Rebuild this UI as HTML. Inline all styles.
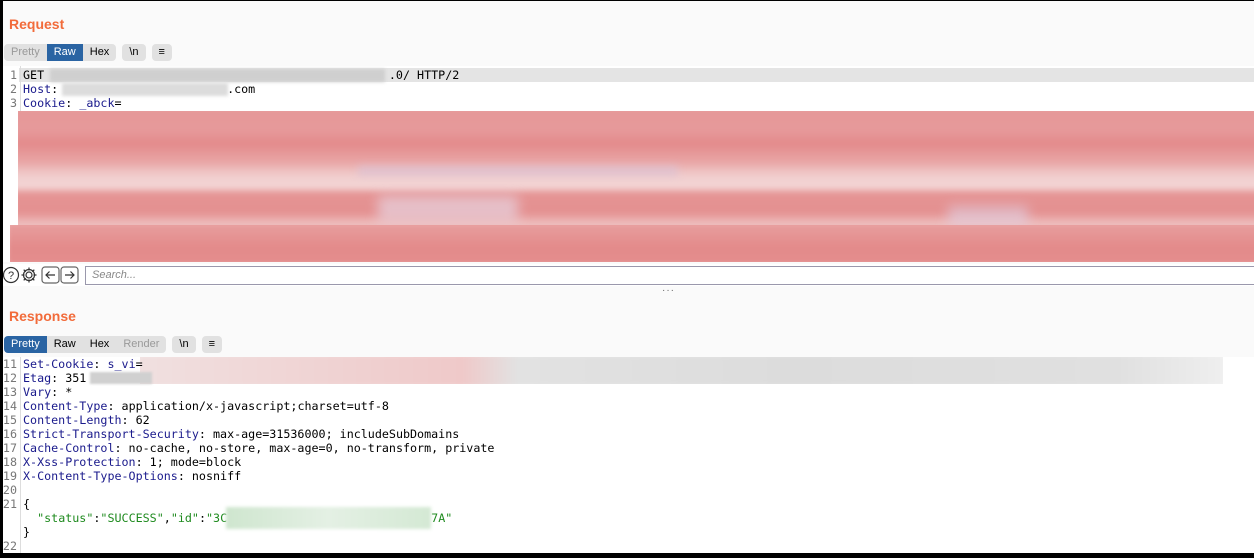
<!DOCTYPE html>
<html><head><meta charset="utf-8"><style>
*{margin:0;padding:0;box-sizing:border-box}
body{width:1254px;height:558px;overflow:hidden;background:#000;font-family:"Liberation Sans",sans-serif;position:relative}
.abs{position:absolute}
.panel{position:absolute;left:3px;top:1px;width:1251px;height:552px;background:#fafafa}
.title{position:absolute;left:9px;color:#f26b3a;font-weight:bold;font-size:14px}
.tabs{position:absolute;display:flex;gap:0;font-size:11px;height:17px}
.tab{padding:0 7px;line-height:17px;background:#e1e1e1;color:#000}
.tab.dis{color:#999}
.tab.sel{background:#2a64a3;color:#fff}
.grp{display:flex;border-radius:4px;overflow:hidden;margin-right:6px}
.code{position:absolute;font-family:"DejaVu Sans Mono","Liberation Mono",monospace;font-size:11.7px;line-height:14px;white-space:pre}
.ln{position:absolute;left:3px;width:14px;text-align:right;color:#777;font-family:"DejaVu Sans Mono",monospace;font-size:11.7px;line-height:14px}
.k{color:#1a1a8c}
.g{color:#1e8a1e}
.blur{position:absolute;filter:blur(3px)}
</style></head><body>
<div class="panel"></div>
<div class="title" style="top:16px">Request</div>
<div class="tabs" style="left:4px;top:44px">
 <div class="grp"><div class="tab dis">Pretty</div><div class="tab sel">Raw</div><div class="tab">Hex</div></div>
 <div class="grp"><div class="tab">\n</div></div>
 <div class="grp"><div class="tab">&#8801;</div></div>
</div>
<div class="abs" style="left:3px;top:66px;width:1251px;height:196px;background:#fff"></div>
<div class="abs" style="left:19px;top:68px;width:1235px;height:14px;background:#e4e4e4"></div>
<div class="abs" style="left:20px;top:66px;width:1px;height:196px;background:#ddd"></div>
<div class="ln" style="top:68px">1<br>2<br>3</div>
<div class="code" style="left:23px;top:68px">GET                                                 .0/ HTTP/2
<span class="k">Host</span>:                        .com
<span class="k">Cookie</span>: <span class="k">_abck</span>=</div>
<div class="blur" style="left:50px;top:69px;width:335px;height:13px;background:#cfcfcf;filter:blur(1.5px)"></div>
<div class="blur" style="left:62px;top:83px;width:166px;height:13px;background:#dcdcdc;filter:blur(1.5px)"></div>
<div class="abs" style="left:18px;top:111px;width:1236px;height:115px;overflow:hidden">
 <div class="blur" style="left:-5px;top:-5px;width:1250px;height:125px;background:linear-gradient(#e59898 0,#e6999a 20%,#e38a8b 30%,#e9a6a6 45%,#f0cccc 55%,#f3d6d6 65%,#e59494 70%,#e49090 85%,#efc2c2 95%,#e9b0b0 100%)"></div>
 <div class="blur" style="left:340px;top:55px;width:320px;height:10px;background:#d8c2d8;opacity:.6;filter:blur(4px)"></div>
 <div class="blur" style="left:360px;top:85px;width:140px;height:25px;background:#e8dfee;opacity:.6;filter:blur(6px)"></div>
 <div class="blur" style="left:930px;top:95px;width:80px;height:20px;background:#e0d3e6;opacity:.6;filter:blur(6px)"></div>
</div>
<div class="abs" style="left:10px;top:225px;width:1244px;height:37px;overflow:hidden">
 <div class="blur" style="left:-4px;top:-4px;width:1260px;height:45px;background:linear-gradient(#e8a0a0,#e38a8a 60%,#e48e8e)"></div>
</div>
<div class="abs" style="left:3px;top:264px;width:1251px;height:22px;background:#fff"></div>
<svg class="abs" style="left:3px;top:266px" width="80" height="18" viewBox="0 0 80 18" fill="none" stroke="#333" stroke-width="1.2">
 <circle cx="8" cy="9" r="7.5"/><text x="5" y="13" font-size="11" fill="#333" stroke="none" font-family="Liberation Sans">?</text>
 <circle cx="26" cy="9" r="3"/><path d="M26 1.5v3M26 13.5v3M18.5 9h3M30.5 9h3M20.7 3.7l2.1 2.1M29.2 12.2l2.1 2.1M20.7 14.3l2.1-2.1M29.2 5.8l2.1-2.1"/><circle cx="26" cy="9" r="5.5"/>
 <rect x="39" y="1" width="17" height="16" rx="3" stroke="#666"/><path d="M52 9H43M46.5 5.5L43 9l3.5 3.5"/>
 <rect x="58" y="1" width="17" height="16" rx="3" stroke="#666"/><path d="M62 9h9M67.5 5.5L71 9l-3.5 3.5"/>
</svg>
<div class="abs" style="left:85px;top:266px;width:1169px;height:19px;border:1px solid #9a98ac;border-right:none;background:#fff;font-size:11px;font-style:italic;color:#888;padding:2px 6px">Search...</div>
<div class="abs" style="left:662px;top:289px;color:#666;font-size:10px;letter-spacing:1px;line-height:4px">&middot;&middot;&middot;</div>
<div class="title" style="top:308px">Response</div>
<div class="tabs" style="left:4px;top:336px">
 <div class="grp"><div class="tab sel">Pretty</div><div class="tab">Raw</div><div class="tab">Hex</div><div class="tab dis">Render</div></div>
 <div class="grp"><div class="tab">\n</div></div>
 <div class="grp"><div class="tab">&#8801;</div></div>
</div>
<div class="abs" style="left:3px;top:357px;width:1251px;height:196px;background:#fff"></div>
<div class="abs" style="left:140px;top:357px;width:1083px;height:27px;overflow:hidden">
 <div class="blur" style="left:-4px;top:-4px;width:1090px;height:35px;background:linear-gradient(90deg,#f0e0e0,#efc9c9 30%,#e2e2e2 35%,#dcdcdc 60%,#e0e0e0 90%,#efefef);"></div>
</div>
<div class="blur" style="left:90px;top:372px;width:62px;height:12px;background:#d0d0d0;filter:blur(1px)"></div>
<div class="abs" style="left:20px;top:357px;width:1px;height:196px;background:#ddd"></div>
<div class="ln" style="top:357px;left:1px;width:16px">11<br>12<br>13<br>14<br>15<br>16<br>17<br>18<br>19<br>20<br>21<br><br><br>22</div>
<div class="code" style="left:23px;top:357px"><span class="k">Set-Cookie</span>: <span class="k">s_vi</span>=
<span class="k">Etag</span>: 351
<span class="k">Vary</span>: *
<span class="k">Content-Type</span>: application/x-javascript;charset=utf-8
<span class="k">Content-Length</span>: 62
<span class="k">Strict-Transport-Security</span>: max-age=31536000; includeSubDomains
<span class="k">Cache-Control</span>: no-cache, no-store, max-age=0, no-transform, private
<span class="k">X-Xss-Protection</span>: 1; mode=block
<span class="k">X-Content-Type-Options</span>: nosniff

{
  <span class="g">"status"</span>:<span class="g">"SUCCESS"</span>,<span class="g">"id"</span>:<span class="g">"3C                             7A"</span>
}
</div>
<div class="blur" style="left:226px;top:507px;width:205px;height:22px;background:linear-gradient(90deg,#cfe6cf,#e4f0e4 50%,#d4e9d4);filter:blur(1.5px)"></div>
</body></html>
